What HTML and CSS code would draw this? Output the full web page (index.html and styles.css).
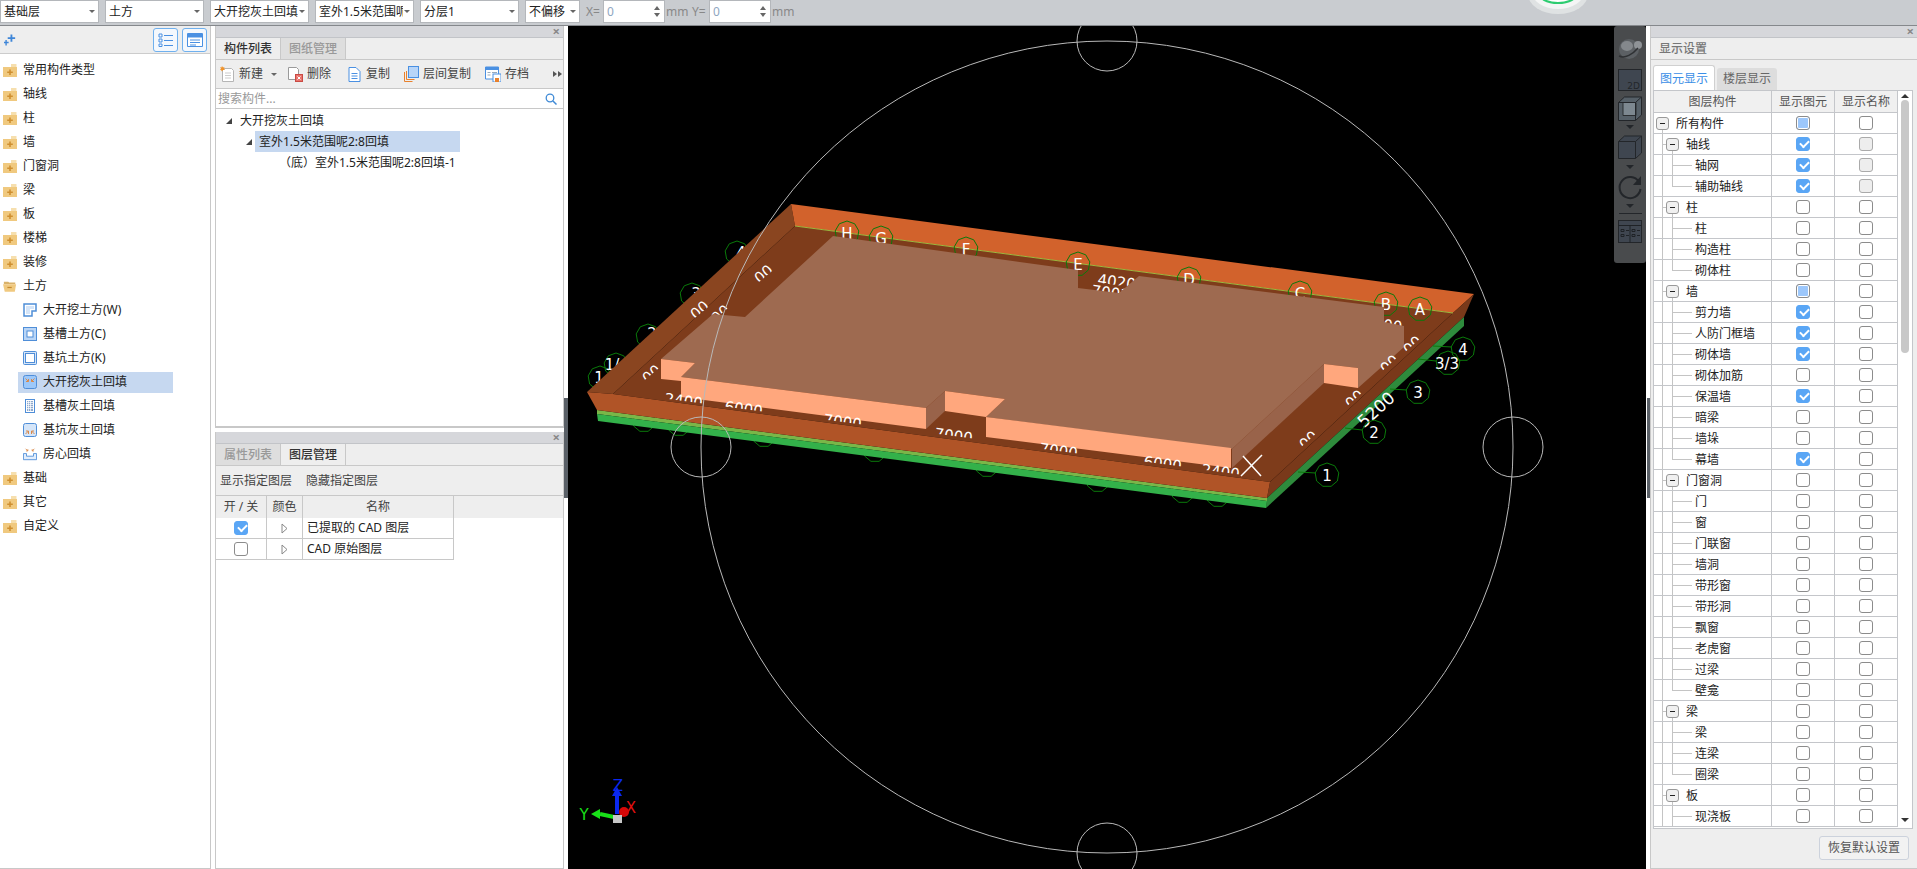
FILE: index.html
```html
<!DOCTYPE html>
<html lang="zh">
<head>
<meta charset="utf-8">
<title>显示设置</title>
<link rel="stylesheet" href="styles.css">
</head>
<body>
<svg class="defs" aria-hidden="true">
  <symbol id="folder" viewBox="0 0 14 14"><path d="M8 1h5.500v3H8z" fill="#f6dfae"/><path d="M0 4h14v10H0z" fill="#f0c97f"/><path d="M6.200 6.500h1.600v2h2v1.400h-2v2H6.200v-2h-2V8.500h2z" fill="#cf8f30"/></symbol>
  <symbol id="folder-open" viewBox="0 0 16 14"><path d="M1 2h5l1 1h7v2H1z" fill="#d9b26a"/><path d="M0 5h15l-1.500 8.500H2z" fill="#f0c97f"/><path d="M5 8h5v1.400H5z" fill="#c58a30"/></symbol>
  <symbol id="pen" viewBox="0 0 14 14"><path d="M1 1h12v7H9v5H1z" fill="#fff" stroke="#4f8ed8" stroke-width="1.500"/><path d="M3 3h8v3H7v5H3z" fill="#d5e5f8"/></symbol>
  <symbol id="sq-light" viewBox="0 0 14 14"><rect x=".5" y=".5" width="13" height="13" fill="#b9d5f6" stroke="#4f8ed8"/><rect x="4" y="4" width="6" height="6" fill="#fff" stroke="#4f8ed8"/></symbol>
  <symbol id="sq-double" viewBox="0 0 14 14"><rect x=".5" y=".5" width="13" height="13" rx="1" fill="#d5e5f8" stroke="#4f8ed8"/><rect x="2.500" y="2.500" width="9" height="9" fill="#fff" stroke="#4f8ed8"/></symbol>
  <symbol id="sq-fill" viewBox="0 0 14 14"><rect x=".5" y=".5" width="13" height="13" rx="2" fill="#9cc8fa" stroke="#4f8ed8"/><path d="M2.500 3.500l3 3M5.500 4v2.500H3M11.500 3.500l-3 3M8.500 4v2.500H11" fill="none" stroke="#d98a4c"/></symbol>
  <symbol id="sq-dots" viewBox="0 0 14 14"><rect x="2.500" y=".5" width="9" height="13" fill="#fff" stroke="#4f8ed8"/><path d="M4 2h6v10H4z" fill="#8fa9cc"/><path d="M4 3.500h6M4 5.500h6M4 7.500h6M4 9.500h6M5.500 2v10M7.500 2v10" stroke="#fff" stroke-width=".7"/></symbol>
  <symbol id="sq-pale" viewBox="0 0 14 14"><rect x=".5" y=".5" width="13" height="13" rx="2" fill="#d5e5f8" stroke="#4f8ed8"/><path d="M2.500 11l3-3M5.500 11V8H3M11.500 11l-3-3M8.500 11V8H11" fill="none" stroke="#d98a4c"/></symbol>
  <symbol id="tray" viewBox="0 0 16 14"><path d="M.5 6.500v7h15v-7H12v3H4v-3z" fill="#e3eefb" stroke="#4f8ed8"/><path d="M3 1l2.500 2.500M5.500 1.500v2H3.500M13 1l-2.500 2.500M10.500 1.500v2h2" fill="none" stroke="#d98a4c"/></symbol>
  <polygon id="hep" points="0,-12 7.700,-9.200 11.800,-2.100 10.400,6 4.100,11.300 -4.100,11.300 -10.400,6 -11.800,-2.100 -7.700,-9.200" fill="none" stroke="#0a7a0a"/>
  <clipPath id="hl"><rect x="-50" y="-14" width="100" height="9"/></clipPath>
  <clipPath id="hm"><rect x="-50" y="-14" width="100" height="12"/></clipPath>
</svg>

<header class="topbar">
  <div class="sel"><span class="sel-t">基础层</span><i class="caret"></i></div>
  <div class="sel"><span class="sel-t">土方</span><i class="caret"></i></div>
  <div class="sel"><span class="sel-t">大开挖灰土回填</span><i class="caret"></i></div>
  <div class="sel"><span class="sel-t">室外1.5米范围呢2:8回填</span><i class="caret"></i></div>
  <div class="sel"><span class="sel-t">分层1</span><i class="caret"></i></div>
  <div class="sel sel-narrow"><span class="sel-t">不偏移</span><i class="caret"></i></div>
  <div class="xy">
    <span class="coord">X=</span>
    <div class="num"><span class="num-v">0</span><span class="spin"><i class="up"></i><i class="down"></i></span></div>
    <span class="unit">mm</span>
    <span class="coord">Y=</span>
    <div class="num"><span class="num-v">0</span><span class="spin"><i class="up"></i><i class="down"></i></span></div>
    <span class="unit">mm</span>
  </div>
  <svg class="logo" viewBox="0 0 70 26"><ellipse cx="35" cy="-6" rx="30" ry="20" fill="#dfe2e3"/><ellipse cx="35" cy="-8" rx="26" ry="17" fill="#f4f5f5"/><ellipse cx="35" cy="-8" rx="20" ry="11" fill="#fff" stroke="#2ecc71" stroke-width="2"/></svg>
</header>

<main class="main">
  <aside class="left">
    <div class="left-head">
      <svg class="sparkle" viewBox="0 0 14 12"><path d="M9 0v3h3v2H9v3H7V5H4V3h3V0z" fill="#3f86d8"/><path d="M3 6v2h2v1.500H3V12H1.500V9.500H0V8h1.500V6z" fill="#3f86d8"/></svg>
      <span class="hd-btn"><svg viewBox="0 0 16 14"><path d="M1 1h3v3H1zM1 6h3v3H1zM1 11h3v2.500H1zM6 2.500h9M6 7.500h9M6 12.500h9" fill="none" stroke="#4a90e2"/></svg></span>
      <span class="hd-btn"><svg viewBox="0 0 16 14"><path d="M.5.5h15v13H.5z" fill="#fff" stroke="#4a90e2"/><path d="M1 1h14v3.500H1z" fill="#4a90e2"/><path d="M3 7h10M3 9.500h10M3 12h6" stroke="#4a90e2"/></svg></span>
    </div>
    <ul class="ltree">
      <li class="li0"><svg class="ic"><use href="#folder"/></svg>常用构件类型</li>
      <li class="li0"><svg class="ic"><use href="#folder"/></svg>轴线</li>
      <li class="li0"><svg class="ic"><use href="#folder"/></svg>柱</li>
      <li class="li0"><svg class="ic"><use href="#folder"/></svg>墙</li>
      <li class="li0"><svg class="ic"><use href="#folder"/></svg>门窗洞</li>
      <li class="li0"><svg class="ic"><use href="#folder"/></svg>梁</li>
      <li class="li0"><svg class="ic"><use href="#folder"/></svg>板</li>
      <li class="li0"><svg class="ic"><use href="#folder"/></svg>楼梯</li>
      <li class="li0"><svg class="ic"><use href="#folder"/></svg>装修</li>
      <li class="li0"><svg class="ic"><use href="#folder-open"/></svg>土方</li>
      <li class="li1"><svg class="ic"><use href="#pen"/></svg>大开挖土方(W)</li>
      <li class="li1"><svg class="ic"><use href="#sq-light"/></svg>基槽土方(C)</li>
      <li class="li1"><svg class="ic"><use href="#sq-double"/></svg>基坑土方(K)</li>
      <li class="li1"><span class="li-sel"><svg class="ic"><use href="#sq-fill"/></svg>大开挖灰土回填</span></li>
      <li class="li1"><svg class="ic"><use href="#sq-dots"/></svg>基槽灰土回填</li>
      <li class="li1"><svg class="ic"><use href="#sq-pale"/></svg>基坑灰土回填</li>
      <li class="li1"><svg class="ic"><use href="#tray"/></svg>房心回填</li>
      <li class="li0"><svg class="ic"><use href="#folder"/></svg>基础</li>
      <li class="li0"><svg class="ic"><use href="#folder"/></svg>其它</li>
      <li class="li0"><svg class="ic"><use href="#folder"/></svg>自定义</li>
    </ul>
  </aside>

  <section class="mid">
    <div class="panel panel-top">
      <div class="p-head"><span class="close">×</span></div>
      <div class="tabs"><span class="tab on">构件列表</span><span class="tab">图纸管理</span></div>
      <div class="tools">
        <span class="tool">
          <svg class="t-ic" viewBox="0 0 15 16"><path d="M2.500 2.500h9l2 2v11h-11z" fill="#fff" stroke="#b5b5b5"/><path d="M5 7h6M5 9.500h6M5 12h6" stroke="#ccc"/><path d="M2 0l1 1.500 1.500-.5-.5 1.500 1 1.500H3L2 5.500 1 4h-1l1-1.500L0 1l1.500.5z" fill="#f0932b"/></svg>
          新建<i class="caret caret-tool"></i>
        </span>
        <span class="tool">
          <svg class="t-ic" viewBox="0 0 15 16"><path d="M.5 1.500h8l2 2v10H.5z" fill="#fff" stroke="#9a9a9a"/><rect x="7.500" y="8.500" width="7" height="7" fill="#e9736c" stroke="#c94a43"/><path d="M9.500 10.500l3 3M12.500 10.500l-3 3" stroke="#fff"/></svg>
          删除
        </span>
        <span class="tool tool-copy">
          <svg class="t-ic" viewBox="0 0 14 16"><path d="M1.500 1.500h7l4 4v10h-11z" fill="#fff" stroke="#4a90e2"/><path d="M4 7.500h6M4 10h6M4 12.500h6" stroke="#4a90e2"/></svg>
          复制
        </span>
        <span class="tool">
          <svg class="t-ic" viewBox="0 0 15 16"><path d="M.5 6v9.500h8M2.500 5v8.500h8" fill="none" stroke="#e8812d"/><rect x="4.500" y=".5" width="10" height="11" fill="#b8d5f8" stroke="#4a90e2"/></svg>
          层间复制
        </span>
        <span class="tool">
          <svg class="t-ic t-ic-w" viewBox="0 0 16 16"><path d="M.5 1h13v12H.5z" fill="#fff" stroke="#4a90e2"/><path d="M1 1h13v3H1z" fill="#4a90e2"/><path d="M2.500 6.500h3M2.500 9h3M7 6.500h5" stroke="#9ab"/><rect x="8" y="8" width="8" height="8" fill="#fff" stroke="#4a90e2"/><rect x="10" y="12" width="4" height="4" fill="#e8812d"/></svg>
          存档
        </span>
        <span class="more"><i class="mt"></i><i class="mt"></i></span>
      </div>
      <div class="search">
        <span class="ph">搜索构件...</span>
        <svg class="mag" viewBox="0 0 12 12"><circle cx="5" cy="5" r="3.800" fill="none" stroke="#3f8ad6" stroke-width="1.300"/><path d="M8 8l3.500 3.500" stroke="#3f8ad6" stroke-width="1.500"/></svg>
      </div>
      <div class="mtree">
        <div class="mrow"><i class="tri tri-a"></i>大开挖灰土回填</div>
        <div class="mrow"><i class="tri tri-b"></i><span class="m-sel">室外1.5米范围呢2:8回填</span></div>
        <div class="mrow mrow-c">（底）室外1.5米范围呢2:8回填-1</div>
      </div>
    </div>

    <div class="panel panel-bottom">
      <div class="p-head"><span class="close">×</span></div>
      <div class="tabs"><span class="tab">属性列表</span><span class="tab on">图层管理</span></div>
      <div class="tools tools-layer"><span>显示指定图层</span><span>隐藏指定图层</span></div>
      <div class="ltable-head">
        <span class="lc lc1">开 / 关</span><span class="lc lc2">颜色</span><span class="lc lc3">名称</span>
      </div>
      <div class="lrow">
        <span class="lc lc1"><i class="cb on"></i></span><span class="lc lc2"><svg class="rtri" viewBox="0 0 7 11"><path d="M1 1l5 4.500-5 4.500z" fill="#fff" stroke="#888"/></svg></span><span class="lc lc3 lname">已提取的 CAD 图层</span>
      </div>
      <div class="lrow">
        <span class="lc lc1"><i class="cb"></i></span><span class="lc lc2"><svg class="rtri" viewBox="0 0 7 11"><path d="M1 1l5 4.500-5 4.500z" fill="#fff" stroke="#888"/></svg></span><span class="lc lc3 lname">CAD 原始图层</span>
      </div>
    </div>
  </section>

  <div class="gutter"><span class="grip"></span></div>

  <section class="viewport">
    <svg class="scene" viewBox="568 26 1078 843">
      <g>
        <use href="#hep" x="737" y="253"/><use href="#hep" x="692" y="295"/><use href="#hep" x="648" y="336"/>
        <use href="#hep" x="616" y="365"/><use href="#hep" x="600" y="378"/>
        <use href="#hep" x="644" y="420"/><use href="#hep" x="679" y="424"/><use href="#hep" x="764" y="435"/>
        <use href="#hep" x="875" y="450"/><use href="#hep" x="987" y="465"/><use href="#hep" x="1098" y="480"/>
        <use href="#hep" x="1183" y="491"/><use href="#hep" x="1218" y="495"/>
        <text class="lb" x="741" y="258">4</text><text class="lb" x="696" y="299">3</text><text class="lb" x="652" y="339">2</text>
        <text class="lb" x="612" y="370">1/</text><text class="lb" x="599" y="383">1</text>
      </g>
      <polygon class="f-left" points="791,204 795,226 613,394 587,392"/>
      <polygon class="f-back" points="791,204 1474,294 1453,313 795,226"/>
      <polygon class="f-floor" points="795,226 1453,313 1270,482 613,394"/>
      <polygon class="f-right" points="1474,294 1453,313 1270,482 1267,498 1464,317"/>
      <line class="seam" x1="795" y1="226" x2="1453" y2="313"/>
      <polygon class="g-right" points="1267,498 1464,317 1464,326 1266,508"/>
      <polygon class="g-light" points="597,410 1267,498 1267,501 597,414"/>
      <polygon class="g-main" points="597,414 1267,501 1266,508 598,421"/>

      <g>
        <use href="#hep" x="847" y="233"/><use href="#hep" x="881" y="238"/><use href="#hep" x="966" y="249"/>
        <use href="#hep" x="1078" y="264"/><use href="#hep" x="1189" y="279"/><use href="#hep" x="1300" y="293"/>
        <use href="#hep" x="1386" y="304"/><use href="#hep" x="1420" y="309"/>
        <text class="lb" x="847" y="239">H</text><text class="lb" x="881" y="244">G</text><text class="lb" x="966" y="255">F</text>
        <text class="lb" x="1078" y="270">E</text><text class="lb" x="1189" y="285">D</text><text class="lb" x="1300" y="299">C</text>
        <text class="lb" x="1386" y="310">B</text><text class="lb" x="1420" y="315">A</text>
      </g>
      <g>
        <text class="dm" transform="translate(767 278) rotate(-40)" clip-path="url(#hm)">00</text>
        <text class="dm" transform="translate(703 314) rotate(-40)" clip-path="url(#hm)">00</text>
        <text class="dm" transform="translate(724 318) rotate(-40)" clip-path="url(#hl)">00</text>
        <text class="dm" transform="translate(655 378) rotate(-40)" clip-path="url(#hl)">00</text>
        <text class="dm" transform="translate(1116 287) rotate(7.500)" clip-path="url(#hm)">4020</text>
        <text class="dm" transform="translate(1110 298) rotate(7.500)" clip-path="url(#hl)">7002</text>
        <text class="dm" transform="translate(1392 331) rotate(7.500)" clip-path="url(#hl)">00</text>
      </g>
      <polygon class="f-top" points="833,236 1078,270 1078,288 1119,293 1139,276 1384,307 1384,322 1404,326 1404,347 1358,388 1358,368 1324,364 1232,449 986,417 1005,399 945,391 926,408 681,377 695,363 661,359 713,314 745,317"/>
      <polygon class="f-side" points="1232,449 1324,364 1324,383 1232,468"/>
      <polygon class="f-side" points="926,408 945,391 945,411 926,429"/>
      <polygon class="f-pale" points="1324,364 1358,368 1358,388 1324,383"/>
      <polygon class="f-pale" points="986,417 1231,448 1231,468 986,437"/>
      <polygon class="f-pale" points="945,391 1005,399 986,417 945,411"/>
      <polygon class="f-pale" points="681,377 926,408 926,429 681,397"/>
      <polygon class="f-pale" points="661,359 695,363 681,377 681,381 661,379"/>
      <polygon class="f-front" points="587,392 613,394 1270,482 1267,498 597,410"/>
      <g>
        <text class="dm" transform="translate(683 406) rotate(7.500)" clip-path="url(#hl)">2400</text>
        <text class="dm" transform="translate(743 414) rotate(7.500)" clip-path="url(#hl)">6000</text>
        <text class="dm" transform="translate(842 427) rotate(7.500)" clip-path="url(#hl)">7000</text>
        <text class="dm" transform="translate(953 441) rotate(7.500)" clip-path="url(#hl)">7000</text>
        <text class="dm" transform="translate(1058 456) rotate(7.500)" clip-path="url(#hl)">7000</text>
        <text class="dm" transform="translate(1162 469) rotate(7.500)" clip-path="url(#hl)">6000</text>
        <text class="dm" transform="translate(1220 477) rotate(7.500)" clip-path="url(#hl)">2400</text>
      </g>
      <g>
        <text class="dm" transform="translate(1416 349) rotate(-42)" clip-path="url(#hl)">00</text>
        <text class="dm" transform="translate(1393 368) rotate(-42)" clip-path="url(#hl)">00</text>
        <text class="dm" transform="translate(1358 403) rotate(-42)" clip-path="url(#hl)">00</text>
        <text class="dm" transform="translate(1312 444) rotate(-42)" clip-path="url(#hl)">00</text>
        <text class="dm dm-lg" transform="translate(1380 414) rotate(-42)">5200</text>
      </g>
      <g>
        <path class="tick" d="M1298 472L1316 473M1345 428L1362 430M1390 389L1407 390M1418 359L1436 361M1433 346L1452 347"/>
        <use href="#hep" x="1327" y="475"/><use href="#hep" x="1374" y="432"/><use href="#hep" x="1418" y="392"/>
        <use href="#hep" x="1448" y="363"/><use href="#hep" x="1463" y="349"/>
        <text class="lb" x="1327" y="481">1</text><text class="lb" x="1374" y="438">2</text><text class="lb" x="1418" y="398">3</text>
        <text class="lb" x="1447" y="369">3/3</text><text class="lb" x="1463" y="355">4</text>
      </g>
      <path class="xmark" d="M1241 476L1262 455M1243 456L1261 476"/>
      <g class="ring">
        <circle cx="1107" cy="447" r="406"/>
        <circle cx="1107" cy="41" r="30"/><circle cx="1107" cy="853" r="30"/>
        <circle cx="701" cy="447" r="30"/><circle cx="1513" cy="447" r="30"/>
      </g>
      <g>
        <text class="ax ax-z" x="618" y="791">Z</text>
        <text class="ax ax-y" x="584" y="820">Y</text>
        <text class="ax ax-x" x="631" y="813">X</text>
        <circle cx="624" cy="812" r="5" fill="#d80808"/>
        <path d="M617 814V794" stroke="#0a28f0" stroke-width="4"/><path d="M612 796l5-9 5 9z" fill="#0a28f0"/>
        <path d="M614 817L600 814" stroke="#18e018" stroke-width="4"/><path d="M600 809l-9 5 9 5z" fill="#18e018"/>
        <rect x="613" y="815" width="9" height="8" fill="#c8c8c8"/>
      </g>
    </svg>

    <svg class="vtools" viewBox="1614 26 32 237">
      <rect x="1614" y="26" width="32" height="237" rx="3" fill="#494b4d"/>
      <ellipse cx="1629" cy="49" rx="10" ry="10" fill="#5c6064"/>
      <ellipse cx="1627" cy="46" rx="6" ry="5" fill="#84888c"/>
      <circle cx="1638" cy="45" r="4" fill="#8f9397"/>
      <path d="M1619 56c6 3 14-2 19-8" fill="none" stroke="#2f3134" stroke-width="1.500"/>
      <rect x="1618.500" y="69.500" width="23" height="21" fill="#3f4650" stroke="#23262a"/>
      <text class="t2d" x="1640" y="89">2D</text>
      <path d="M1618.500 120.500v-18l6-5.500h17v18l-6 5.500z" fill="#566068" stroke="#23262a"/>
      <path d="M1623 102.500h13v13h-13z" fill="#7d8890" stroke="#2b2e31"/>
      <path d="M1618.500 102.500h17v18M1635.500 102.500l6-5.500" fill="none" stroke="#23262a"/>
      <path d="M1626 125h8l-4 4z" fill="#23262a"/>
      <path d="M1618.500 158.500v-17l6-5.500h17v17l-6 5.500z" fill="#3f4650" stroke="#23262a"/>
      <path d="M1618.500 141.500h17v17M1635.500 141.500l6-5.500" fill="none" stroke="#23262a"/>
      <path d="M1626 165h8l-4 4z" fill="#23262a"/>
      <path d="M1639 182a10.500 10.500 0 1 0 1.500 7" fill="none" stroke="#23262a" stroke-width="2"/>
      <path d="M1641 176v9h-8z" fill="#23262a"/>
      <path d="M1626 204h8l-4 4z" fill="#23262a"/>
      <path d="M1619 213.500h23" stroke="#23262a"/>
      <rect x="1618.500" y="220.500" width="23" height="22" fill="#3f4650" stroke="#23262a"/>
      <path d="M1618.500 225.500h23M1630 225.500v17M1621 229.500h3v2h-3zM1626 230.500h3M1621 234.500h3v2h-3zM1626 235.500h3M1632 229.500h3v2h-3zM1637 230.500h3M1632 234.500h3v2h-3zM1637 235.500h3" fill="none" stroke="#1f2226"/>
    </svg>
  </section>

  <div class="gutter gutter-r"><span class="grip grip-r"></span></div>

  <aside class="right">
    <div class="p-head"><span class="close">×</span></div>
    <div class="r-title">显示设置</div>
    <div class="r-tabs"><span class="r-tab on">图元显示</span><span class="r-tab">楼层显示</span></div>
    <div class="tbox">
      <div class="grid">
        <div class="row head"><span class="c">图层构件</span><span class="c">显示图元</span><span class="c">显示名称</span></div>
        <div class="row"><span class="c t n0"><i class="tg"></i>所有构件</span><span class="c"><i class="cb part"></i></span><span class="c"><i class="cb"></i></span></div>
        <div class="row"><span class="c t n1"><i class="tg"></i>轴线</span><span class="c"><i class="cb on"></i></span><span class="c"><i class="cb off"></i></span></div>
        <div class="row"><span class="c t n2">轴网</span><span class="c"><i class="cb on"></i></span><span class="c"><i class="cb off"></i></span></div>
        <div class="row"><span class="c t n2 last">辅助轴线</span><span class="c"><i class="cb on"></i></span><span class="c"><i class="cb off"></i></span></div>
        <div class="row"><span class="c t n1"><i class="tg"></i>柱</span><span class="c"><i class="cb"></i></span><span class="c"><i class="cb"></i></span></div>
        <div class="row"><span class="c t n2">柱</span><span class="c"><i class="cb"></i></span><span class="c"><i class="cb"></i></span></div>
        <div class="row"><span class="c t n2">构造柱</span><span class="c"><i class="cb"></i></span><span class="c"><i class="cb"></i></span></div>
        <div class="row"><span class="c t n2 last">砌体柱</span><span class="c"><i class="cb"></i></span><span class="c"><i class="cb"></i></span></div>
        <div class="row"><span class="c t n1"><i class="tg"></i>墙</span><span class="c"><i class="cb part"></i></span><span class="c"><i class="cb"></i></span></div>
        <div class="row"><span class="c t n2">剪力墙</span><span class="c"><i class="cb on"></i></span><span class="c"><i class="cb"></i></span></div>
        <div class="row"><span class="c t n2">人防门框墙</span><span class="c"><i class="cb on"></i></span><span class="c"><i class="cb"></i></span></div>
        <div class="row"><span class="c t n2">砌体墙</span><span class="c"><i class="cb on"></i></span><span class="c"><i class="cb"></i></span></div>
        <div class="row"><span class="c t n2">砌体加筋</span><span class="c"><i class="cb"></i></span><span class="c"><i class="cb"></i></span></div>
        <div class="row"><span class="c t n2">保温墙</span><span class="c"><i class="cb on"></i></span><span class="c"><i class="cb"></i></span></div>
        <div class="row"><span class="c t n2">暗梁</span><span class="c"><i class="cb"></i></span><span class="c"><i class="cb"></i></span></div>
        <div class="row"><span class="c t n2">墙垛</span><span class="c"><i class="cb"></i></span><span class="c"><i class="cb"></i></span></div>
        <div class="row"><span class="c t n2 last">幕墙</span><span class="c"><i class="cb on"></i></span><span class="c"><i class="cb"></i></span></div>
        <div class="row"><span class="c t n1"><i class="tg"></i>门窗洞</span><span class="c"><i class="cb"></i></span><span class="c"><i class="cb"></i></span></div>
        <div class="row"><span class="c t n2">门</span><span class="c"><i class="cb"></i></span><span class="c"><i class="cb"></i></span></div>
        <div class="row"><span class="c t n2">窗</span><span class="c"><i class="cb"></i></span><span class="c"><i class="cb"></i></span></div>
        <div class="row"><span class="c t n2">门联窗</span><span class="c"><i class="cb"></i></span><span class="c"><i class="cb"></i></span></div>
        <div class="row"><span class="c t n2">墙洞</span><span class="c"><i class="cb"></i></span><span class="c"><i class="cb"></i></span></div>
        <div class="row"><span class="c t n2">带形窗</span><span class="c"><i class="cb"></i></span><span class="c"><i class="cb"></i></span></div>
        <div class="row"><span class="c t n2">带形洞</span><span class="c"><i class="cb"></i></span><span class="c"><i class="cb"></i></span></div>
        <div class="row"><span class="c t n2">飘窗</span><span class="c"><i class="cb"></i></span><span class="c"><i class="cb"></i></span></div>
        <div class="row"><span class="c t n2">老虎窗</span><span class="c"><i class="cb"></i></span><span class="c"><i class="cb"></i></span></div>
        <div class="row"><span class="c t n2">过梁</span><span class="c"><i class="cb"></i></span><span class="c"><i class="cb"></i></span></div>
        <div class="row"><span class="c t n2 last">壁龛</span><span class="c"><i class="cb"></i></span><span class="c"><i class="cb"></i></span></div>
        <div class="row"><span class="c t n1"><i class="tg"></i>梁</span><span class="c"><i class="cb"></i></span><span class="c"><i class="cb"></i></span></div>
        <div class="row"><span class="c t n2">梁</span><span class="c"><i class="cb"></i></span><span class="c"><i class="cb"></i></span></div>
        <div class="row"><span class="c t n2">连梁</span><span class="c"><i class="cb"></i></span><span class="c"><i class="cb"></i></span></div>
        <div class="row"><span class="c t n2 last">圈梁</span><span class="c"><i class="cb"></i></span><span class="c"><i class="cb"></i></span></div>
        <div class="row"><span class="c t n1"><i class="tg"></i>板</span><span class="c"><i class="cb"></i></span><span class="c"><i class="cb"></i></span></div>
        <div class="row"><span class="c t n2">现浇板</span><span class="c"><i class="cb"></i></span><span class="c"><i class="cb"></i></span></div>
      </div>
      <div class="sbar"><i class="s-up"></i><span class="s-thumb"></span><i class="s-down"></i></div>
    </div>
    <div class="r-foot"><button class="reset">恢复默认设置</button></div>
  </aside>
</main>
</body>
</html>
```

FILE: styles.css
```css
* { box-sizing: border-box; }
html, body { margin: 0; padding: 0; }
body {
  width: 1917px;
  height: 869px;
  overflow: hidden;
  background: #fff;
  color: #222;
  font: 12px/16px "Noto Sans", "Noto Sans CJK SC", sans-serif;
}
i { display: block; font-style: normal; }
.defs { position: absolute; width: 0; height: 0; }

/* top bar */
.topbar {
  position: relative;
  display: flex;
  align-items: flex-start;
  gap: 6px;
  height: 26px;
  background: #c9ccd0;
  border-bottom: 1px solid #85888c;
  overflow: hidden;
}
.sel {
  display: flex;
  align-items: center;
  flex: none;
  width: 99px;
  height: 23px;
  padding: 0 3px;
  background: #fff;
  border: 1px solid #b4b7bb;
}
.sel-narrow { width: 55px; }
.sel-t { flex: 1; min-width: 0; overflow: hidden; white-space: nowrap; }
.caret {
  flex: none;
  margin-left: 1px;
  border: 3px solid transparent;
  border-top: 3px solid #666;
  border-bottom: 0;
}
.xy { display: flex; align-items: flex-start; flex: none; }
.coord { flex: none; width: 17px; color: #888; line-height: 23px; white-space: nowrap; }
.num {
  display: flex;
  align-items: center;
  flex: none;
  width: 62px;
  height: 23px;
  padding: 0 4px 0 3px;
  background: #fff;
  border: 1px solid #b4b7bb;
}
.num-v { flex: 1; color: #8fa6bf; }
.spin { display: flex; flex-direction: column; gap: 3px; }
.up { border: 3px solid transparent; border-bottom: 4px solid #666; border-top: 0; }
.down { border: 3px solid transparent; border-top: 4px solid #666; border-bottom: 0; }
.unit { flex: none; width: 27px; padding-left: 1px; color: #888; line-height: 23px; }
.logo { position: absolute; left: 1523px; top: 0; width: 70px; height: 26px; }

/* layout */
.main { display: flex; height: 843px; }

/* left tree */
.left { flex: none; width: 211px; border-right: 1px solid #c8c8c8; border-bottom: 1px solid #c8c8c8; }
.left-head {
  display: flex;
  align-items: center;
  gap: 4px;
  height: 28px;
  padding: 0 3px 0 4px;
  background: #eee;
  border-bottom: 1px solid #ccc;
}
.sparkle { width: 13px; height: 12px; margin-right: auto; }
.hd-btn {
  display: flex;
  align-items: center;
  justify-content: center;
  width: 25px;
  height: 24px;
  background: #f4f8fd;
  border: 1px solid #6fb0ee;
  border-radius: 3px;
}
.hd-btn svg { width: 16px; height: 14px; }
.ltree { list-style: none; margin: 0; padding: 4px 0 0; }
.ltree li { display: flex; align-items: center; height: 24px; white-space: nowrap; }
.ic { flex: none; width: 14px; height: 14px; margin-right: 6px; }
.li0 { padding-left: 3px; }
.li1 { padding-left: 23px; }
.li1 .li-sel { display: flex; align-items: center; height: 21px; width: 155px; margin-left: -5px; padding-left: 5px; background: #c6d8f0; }

/* middle */
.mid { flex: none; display: flex; flex-direction: column; gap: 4px; width: 349px; margin-left: 4px; }
.panel { border-left: 1px solid #c8c8c8; border-right: 1px solid #c8c8c8; background: #fff; }
.panel-top { height: 402px; border-bottom: 2px solid #c8c8c8; }
.panel-bottom { flex: 1; border-bottom: 1px solid #c8c8c8; }
.p-head {
  display: flex;
  justify-content: flex-end;
  align-items: center;
  height: 12px;
  padding-right: 3px;
  background: #d6d7db;
  border-bottom: 1px solid #c2c4c8;
}
.close { color: #888; font-size: 13px; line-height: 11px; font-weight: 700; }
.tabs { display: flex; height: 22px; background: #eee; border-bottom: 1px solid #c8c8c8; }
.tab {
  width: 65px;
  text-align: center;
  line-height: 21px;
  color: #999;
  background: #dedede;
  border-right: 1px solid #c8c8c8;
  font-weight: 500;
}
.tab.on { background: #eee; color: #333; }
.tools {
  display: flex;
  align-items: center;
  gap: 14px;
  height: 29px;
  padding-left: 4px;
  background: #eee;
  border-bottom: 1px solid #c8c8c8;
  color: #444;
}
.tool { display: flex; align-items: center; gap: 4px; white-space: nowrap; }
.tool-copy { margin-left: 2px; }
.t-ic { width: 15px; height: 16px; flex: none; }
.t-ic-w { width: 16px; }
.caret-tool { margin-left: 4px; margin-right: -3px; }
.more { display: flex; gap: 1px; margin-left: auto; padding-right: 1px; }
.mt { border-left: 4px solid #555; border-top: 3px solid transparent; border-bottom: 3px solid transparent; }
.search {
  display: flex;
  align-items: center;
  justify-content: space-between;
  height: 20px;
  padding: 0 6px 0 2px;
  border-bottom: 1px solid #c8c8c8;
}
.ph { color: #999; }
.mag { width: 12px; height: 12px; }
.mtree { padding-top: 1px; }
.mrow { display: flex; align-items: center; height: 21px; white-space: nowrap; }
.tri { flex: none; border-bottom: 6px solid #444; border-left: 6px solid transparent; }
.tri-a { margin: 0 8px 0 10px; }
.tri-b { margin: 0 3px 0 30px; }
.m-sel { display: block; width: 205px; height: 21px; line-height: 21px; padding-left: 4px; background: #c6d8f0; }
.mrow-c { padding-left: 63px; }
.tools-layer { height: 30px; gap: 14px; padding-left: 4px; }
.ltable-head, .lrow { display: flex; width: 238px; }
.ltable-head { width: 100%; height: 22px; background: #eee; }
.lc {
  display: flex;
  align-items: center;
  justify-content: center;
  height: 100%;
  border-right: 1px solid #c8c8c8;
  flex: none;
}
.lc1 { width: 51px; }
.lc2 { width: 36px; }
.lc3 { width: 151px; }
.lrow { height: 21px; border-bottom: 1px solid #c8c8c8; }
.ltable-head .lc { color: #444; }
.lname { justify-content: flex-start; padding-left: 4px; }
.rtri { width: 7px; height: 11px; }

/* gutters */
.gutter { flex: none; display: flex; align-items: center; width: 4px; }
.grip { display: block; width: 4px; height: 100px; background: #5a6067; }
.gutter-r { justify-content: flex-end; }
.grip-r { width: 3px; }

/* viewport */
.viewport { position: relative; flex: none; width: 1078px; height: 843px; background: #000; overflow: hidden; }
.scene { display: block; width: 1078px; height: 843px; }
.vtools { position: absolute; top: 0; right: 0; width: 32px; height: 237px; }
.f-left { fill: #8a4520; }
.f-back { fill: #d2622c; }
.f-floor { fill: #7e3c1b; }
.f-right { fill: #79391a; }
.f-front { fill: #b05427; }
.f-top { fill: #9e6a50; }
.f-side { fill: #99634a; }
.f-pale { fill: #ffa77d; }
.g-right { fill: #2e8b3c; }
.g-light { fill: #7ab648; }
.g-main { fill: #33b14a; }
.seam { stroke: #9fb83f; stroke-width: 1; }
.tick { stroke: #0a7a0a; fill: none; }
.xmark { stroke: #fff; stroke-width: 1.500; fill: none; }
.ring { fill: none; stroke: #b9b9b9; stroke-width: 1; }
.lb { fill: #fff; font: 15px "DejaVu Sans", sans-serif; text-anchor: middle; }
.dm { fill: #fff; font: 15px "DejaVu Sans", sans-serif; text-anchor: middle; }
.dm-lg { font-size: 17px; }
.ax { font: 15px "DejaVu Sans", sans-serif; text-anchor: middle; }
.ax-z { fill: #0a28f0; }
.ax-y { fill: #18e018; }
.ax-x { fill: #e01010; }
.t2d { fill: #23262a; font: 9px "DejaVu Sans", sans-serif; text-anchor: end; }

/* checkboxes */
.cb {
  position: relative;
  width: 14px;
  height: 14px;
  background: #fff;
  border: 1px solid #8c8c8c;
  border-radius: 3px;
}
.cb.off { background: #eee; border-color: #aaa; }
.cb.part { background: #9cc7fb; box-shadow: inset 0 0 0 1px #fff; }
.cb.on { background: #5aa6f5; border-color: #5aa6f5; }
.cb.on::after {
  content: "";
  position: absolute;
  left: 3px;
  top: 2px;
  width: 7px;
  height: 4px;
  border-left: 2px solid #fff;
  border-bottom: 2px solid #fff;
  transform: rotate(-45deg);
}

/* right panel */
.right { flex: none; width: 267px; height: 843px; background: #eee; border-left: 1px solid #c8c8c8; border-bottom: 1px solid #c8c8c8; }
.r-title { height: 22px; padding-left: 8px; line-height: 21px; color: #777; border-bottom: 1px solid #c8c8c8; font-weight: 500; }
.r-tabs { display: flex; align-items: flex-end; gap: 2px; height: 30px; padding-left: 2px; }
.r-tab {
  width: 60px;
  height: 22px;
  line-height: 22px;
  text-align: center;
  color: #666;
  background: #ddd;
  border-radius: 3px 3px 0 0;
}
.r-tab.on { width: 62px; height: 25px; line-height: 25px; color: #3a8ee6; background: #fff; border: 1px solid #d0d0d0; border-bottom: 0; }
.tbox {
  display: flex;
  width: 260px;
  height: 739px;
  margin-left: 2px;
  background: #fff;
  border: 1px solid #c4c6ca;
  overflow: hidden;
}
.grid { flex: none; width: 244px; }
.row {
  display: grid;
  grid-template-columns: 118px 63px 63px;
  height: 21px;
  border-bottom: 1px solid #c4c6ca;
}
.row.head { height: 22px; background: #f0f0f0; color: #444; }
.c {
  display: flex;
  align-items: center;
  justify-content: center;
  border-right: 1px solid #c4c6ca;
}
.head .c { color: #555; }
.t { justify-content: flex-start; padding-top: 1px; color: #222; white-space: nowrap; }
.tg {
  position: relative;
  flex: none;
  width: 13px;
  height: 13px;
  margin-right: 7px;
  background: #f0f0f0;
  border: 1px solid #999;
  border-radius: 3px;
}
.tg::after { content: ""; position: absolute; left: 3px; top: 5px; width: 5px; height: 1px; background: #222; }
.n0 {
  padding-left: 2px;
  background: linear-gradient(#c4c4c4, #c4c4c4) 8px 100% / 1px 50% no-repeat;
}
.n1 {
  padding-left: 12px;
  background:
    linear-gradient(#c4c4c4, #c4c4c4) 8px 0 / 1px 100% no-repeat,
    linear-gradient(#c4c4c4, #c4c4c4) 8px 50% / 5px 1px no-repeat,
    linear-gradient(#c4c4c4, #c4c4c4) 18px 100% / 1px 50% no-repeat;
}
.n2 {
  padding-left: 41px;
  background:
    linear-gradient(#c4c4c4, #c4c4c4) 8px 0 / 1px 100% no-repeat,
    linear-gradient(#c4c4c4, #c4c4c4) 18px 0 / 1px 100% no-repeat,
    linear-gradient(#c4c4c4, #c4c4c4) 18px 50% / 20px 1px no-repeat;
}
.n2.last {
  background:
    linear-gradient(#c4c4c4, #c4c4c4) 8px 0 / 1px 100% no-repeat,
    linear-gradient(#c4c4c4, #c4c4c4) 18px 0 / 1px 50% no-repeat,
    linear-gradient(#c4c4c4, #c4c4c4) 18px 50% / 20px 1px no-repeat;
}
.sbar { flex: 1; display: flex; flex-direction: column; align-items: center; padding: 3px 0 6px; }
.s-up { border: 4px solid transparent; border-bottom: 4px solid #333; border-top: 0; }
.s-down { margin-top: auto; border: 4px solid transparent; border-top: 4px solid #333; border-bottom: 0; }
.s-thumb { display: block; width: 8px; height: 253px; margin-top: 2px; background: #c8c8c8; border-radius: 4px; }
.r-foot { display: flex; justify-content: flex-end; padding: 7px 8px 0 0; }
.reset {
  width: 90px;
  height: 24px;
  padding: 0;
  color: #555;
  font: inherit;
  background: #f2f2f2;
  border: 1px solid #ccd2dc;
  border-radius: 3px;
}
```
